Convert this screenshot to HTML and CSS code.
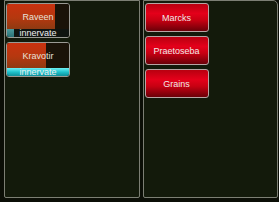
FILE: index.html
```html
<!DOCTYPE html>
<html lang="en">
<head>
  <meta charset="UTF-8" />
  <title>Raid Frames</title>
  <link rel="stylesheet" href="styles.css">
</head>
<body>
  <div class="frames">
    <div class="panel">
      <div class="unit">
        <div class="health">
          <div class="fill" style="width: 78%;"></div>
          <span class="name">Raveen</span>
        </div>
        <div class="cast">
          <div class="cast-fill dim" style="width: 12%;"></div>
          <span class="spell">innervate</span>
        </div>
      </div>
      <div class="unit">
        <div class="health">
          <div class="fill" style="width: 63%;"></div>
          <span class="name">Kravotir</span>
        </div>
        <div class="cast">
          <div class="cast-fill" style="width: 100%;"></div>
          <span class="spell">innervate</span>
        </div>
      </div>
    </div>
    <div class="panel right">
      <div class="target">Marcks</div>
      <div class="target">Praetoseba</div>
      <div class="target">Grains</div>
    </div>
  </div>
</body>
</html>
```

FILE: styles.css
```css
body {
  margin: 0;
  background: #0b0e06;
  font-family: "Liberation Sans", Arial, sans-serif;
}
.frames {
  display: flex;
  gap: 3px;
  padding: 0 1px 0 4px;
  height: 198px;
}
.panel {
  flex: 1;
  background: #131a0b;
  border: 1px solid #7c7f74;
  border-radius: 0 0 2px 2px;
  padding: 2px 1px;
  display: flex;
  flex-direction: column;
  gap: 4px;
}
.panel.right {
  border-radius: 0 5px 2px 2px;
  padding: 2px 1px;
  gap: 4px;
}
.unit {
  width: 62px;
  height: 33px;
  border: 1px solid #9a9a94;
  border-radius: 3px;
  overflow: hidden;
  display: flex;
  flex-direction: column;
  background: #140f07;
}
.health {
  position: relative;
  flex: 1;
  background: #1a1308;
}
.fill {
  height: 100%;
  background: linear-gradient(180deg, #c9320f 0%, #b5380f 55%, #8e3a12 100%);
}
.name {
  position: absolute;
  inset: 0;
  display: flex;
  align-items: center;
  justify-content: center;
  color: #e8e0d8;
  font-size: 9px;
}
.cast {
  position: relative;
  height: 8px;
  background: #0f1410;
}
.cast-fill {
  height: 100%;
  background: linear-gradient(180deg, #6ff0f4 0%, #1fc2cc 50%, #0e8f99 100%);
}
.cast-fill.dim {
  background: linear-gradient(180deg, #4a9a9c 0%, #2b7276 100%);
}
.spell {
  position: absolute;
  inset: 0;
  display: flex;
  align-items: center;
  justify-content: center;
  color: #f0f0f0;
  font-size: 9px;
  line-height: 8px;
}
.target {
  width: 62px;
  height: 27px;
  border: 1px solid #b8a4a4;
  border-radius: 3px;
  background: linear-gradient(180deg, #b80010 0%, #e4001a 35%, #c80012 60%, #6a0008 100%);
  color: #f2e8e8;
  font-size: 9px;
  display: flex;
  align-items: center;
  justify-content: center;
}
```
